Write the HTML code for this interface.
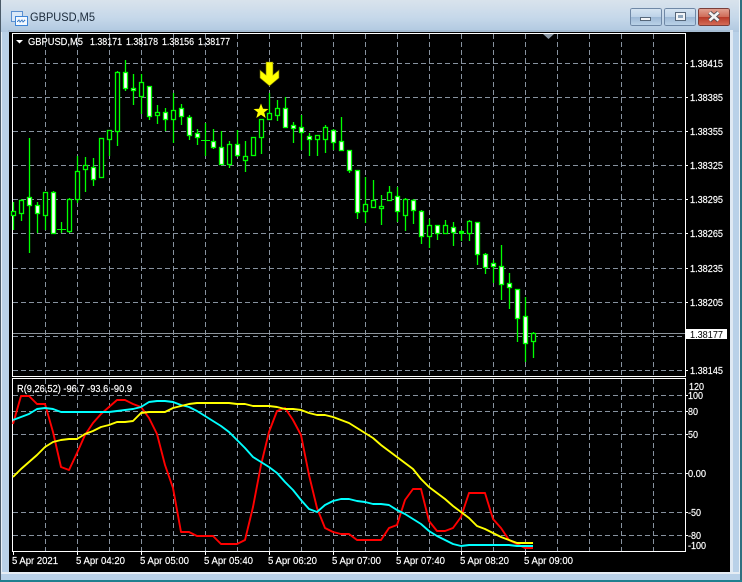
<!DOCTYPE html>
<html><head><meta charset="utf-8"><title>GBPUSD,M5</title>
<style>
html,body{margin:0;padding:0;width:742px;height:582px;overflow:hidden;background:#cfdfee}
svg{position:absolute;left:0;top:0;display:block}
text{font-family:"Liberation Sans",sans-serif;font-size:10.5px;fill:#fff;stroke:#fff;stroke-width:.18px}
</style></head><body>
<svg width="742" height="582" viewBox="0 0 742 582" xmlns="http://www.w3.org/2000/svg" shape-rendering="crispEdges">
<defs>
<linearGradient id="tb" x1="0" y1="0" x2="0" y2="1"><stop offset="0" stop-color="#d9e3ec"/><stop offset=".55" stop-color="#c6d8ea"/><stop offset="1" stop-color="#b0c8e0"/></linearGradient>
<linearGradient id="bt" x1="0" y1="0" x2="0" y2="1"><stop offset="0" stop-color="#d6e4f1"/><stop offset=".5" stop-color="#bcd2e8"/><stop offset=".51" stop-color="#9db9d6"/><stop offset="1" stop-color="#bcd3e8"/></linearGradient>
<linearGradient id="cl" x1="0" y1="0" x2="0" y2="1"><stop offset="0" stop-color="#e2a494"/><stop offset=".5" stop-color="#cf6b57"/><stop offset=".51" stop-color="#b83a28"/><stop offset="1" stop-color="#d6705a"/></linearGradient>
</defs>
<!-- window frame -->
<rect x="0" y="0" width="742" height="32" fill="url(#tb)"/>
<rect x="0" y="32" width="742" height="550" fill="#b9d1e8"/>
<rect x="0" y="0" width="1" height="582" fill="#4a5a68"/>
<rect x="1" y="32" width="1" height="540" fill="#e8f0f8"/>
<rect x="733" y="32" width="6" height="540" fill="#b9d1e8"/>
<rect x="730" y="30" width="3" height="544" fill="#dfe9f3"/>
<rect x="739" y="0" width="1" height="582" fill="#eaf2f8"/>
<rect x="740" y="0" width="2" height="582" fill="#2f6f7f"/>
<rect x="1" y="572" width="739" height="2" fill="#e6edf4"/>
<rect x="1" y="574" width="739" height="6" fill="#b9d1e8"/>
<rect x="0" y="580" width="742" height="2" fill="#1f7f8f"/>
<rect x="8" y="30" width="722" height="2" fill="#a6bcd2"/>
<!-- title icon -->
<rect x="11.5" y="11.5" width="11" height="10" fill="#dbe9f8" stroke="#5a8fd0"/>
<rect x="15.5" y="16.5" width="12" height="9" fill="#f4f9ff" stroke="#3f86d8"/>
<path d="M17 22l2-2 1 2 2-2 1 2 2-2" fill="none" stroke="#3f7fc8"/>
<text x="30" y="21" style="font-size:12px;fill:#1b2a3a;stroke:none" textLength="65" lengthAdjust="spacingAndGlyphs" shape-rendering="auto">GBPUSD,M5</text>
<!-- window buttons -->
<rect x="630.5" y="8.5" width="31" height="17" rx="2" fill="url(#bt)" stroke="#6f88a6"/>
<rect x="640.5" y="17.5" width="10" height="3" fill="#f1f4f7" stroke="#56677a"/>
<rect x="664.5" y="8.5" width="31" height="17" rx="2" fill="url(#bt)" stroke="#6f88a6"/>
<rect x="675.5" y="12.5" width="10" height="8" fill="#f1f4f7" stroke="#56677a"/>
<rect x="678" y="15" width="5" height="3" fill="#8fa6bc"/>
<rect x="698.5" y="8.5" width="31" height="17" rx="2" fill="url(#cl)" stroke="#7a3f3a"/>
<path d="M709.5 12.5L718.5 20.5M718.5 12.5L709.5 20.5" stroke="#4e4e55" stroke-width="4.4" fill="none" shape-rendering="auto"/>
<path d="M709.5 12.5L718.5 20.5M718.5 12.5L709.5 20.5" stroke="#f3f3f3" stroke-width="2.6" fill="none" shape-rendering="auto"/>
<!-- client -->
<rect x="9" y="32" width="721" height="540" fill="#000"/>
<!-- grid -->
<g stroke="#87929f" stroke-width="1" stroke-dasharray="5 3" fill="none">
<path d="M13 63.5H685M13 97.5H685M13 131.5H685M13 165.5H685M13 199.5H685M13 233.5H685M13 268.5H685M13 302.5H685M13 336.5H685M13 370.5H685"/>
<path d="M13 395.5H685M13 411.5H685M13 434.5H685M13 473.5H685M13 512.5H685M13 535.5H685"/>
<path d="M45.5 34V376M77.5 34V376M109.5 34V376M141.5 34V376M173.5 34V376M205.5 34V376M237.5 34V376M269.5 34V376M301.5 34V376M333.5 34V376M365.5 34V376M397.5 34V376M429.5 34V376M461.5 34V376M493.5 34V376M525.5 34V376M557.5 34V376M589.5 34V376M621.5 34V376M653.5 34V376"/>
<path d="M45.5 379V551M77.5 379V551M109.5 379V551M141.5 379V551M173.5 379V551M205.5 379V551M237.5 379V551M269.5 379V551M301.5 379V551M333.5 379V551M365.5 379V551M397.5 379V551M429.5 379V551M461.5 379V551M493.5 379V551M525.5 379V551M557.5 379V551M589.5 379V551M621.5 379V551M653.5 379V551"/>
</g>
<!-- current price line -->
<rect x="13" y="333" width="672" height="1" fill="#8d949b"/>
<!-- frames -->
<g fill="none" stroke="#fff">
<path d="M12.5 33.5H685.5V376.5H12.5Z"/>
<path d="M12.5 378.5H685.5V551.5H12.5Z"/>
</g>
<!-- axis ticks -->
<path d="M686 63.5h2M686 97.5h2M686 131.5h2M686 165.5h2M686 199.5h2M686 233.5h2M686 268.5h2M686 302.5h2M686 370.5h2M686 395.5h2M686 411.5h2M686 434.5h2M686 473.5h2M686 512.5h2M686 535.5h2M13.5 552v3M77.5 552v3M141.5 552v3M205.5 552v3M269.5 552v3M333.5 552v3M397.5 552v3M461.5 552v3M525.5 552v3" stroke="#fff" fill="none"/>
<!-- wicks -->
<path stroke="#00ff00" stroke-width="1.3" shape-rendering="auto" fill="none" d="M13.5 202V230M21.5 199V221M29.5 138V253M37.5 202V233M45.5 192V230M53.5 191V233M61.5 222V233M69.5 198V233M77.5 156V203M85.5 157V192M93.5 158V186M101.5 138V177M109.5 130V156M117.5 71V146M125.5 60V91M133.5 74V105M141.5 74V114M149.5 86V120M157.5 105V124M165.5 108V131M173.5 93V143M181.5 104V125M189.5 115V140M197.5 129V145M205.5 123V156M213.5 129V149M221.5 131V165M229.5 141V168M237.5 130V157M245.5 141V172M253.5 137V156M261.5 119V154M269.5 93V119M277.5 100V121M285.5 97V128M293.5 122V143M301.5 115V150M309.5 133V156M317.5 135V156M325.5 125V153M333.5 129V150M341.5 117V151M349.5 150V173M357.5 170V219M365.5 177V223M373.5 180V208M381.5 195V225M389.5 186V201M397.5 187V222M405.5 198V231M413.5 199V224M421.5 210V244M429.5 219V248M437.5 225V240M445.5 220V233M453.5 222V246M461.5 230V241M469.5 220V241M477.5 222V265M485.5 253V274M493.5 260V283M501.5 245V300M509.5 273V309M517.5 289V342M525.5 297V362M533.5 332V358"/>
<!-- doji -->
<path stroke="#00ff00" fill="none" d="M57 229.5H66M201 140.5H210"/>
<rect x="459" y="231" width="5" height="3" fill="#00ff00"/>
<!-- black bodies -->
<g fill="#000" stroke="#00ff00" stroke-width="1.3" shape-rendering="auto">
<rect x="11.5" y="211.5" width="4" height="4"/>
<rect x="19.5" y="200.5" width="4" height="13"/>
<rect x="43.5" y="192.5" width="4" height="23"/>
<rect x="67.5" y="199.5" width="4" height="32"/>
<rect x="75.5" y="171.5" width="4" height="28"/>
<rect x="83.5" y="165.5" width="4" height="4"/>
<rect x="99.5" y="138.5" width="4" height="39"/>
<rect x="107.5" y="130.5" width="4" height="9"/>
<rect x="115.5" y="72.5" width="4" height="59"/>
<rect x="139.5" y="82.5" width="4" height="14"/>
<rect x="155.5" y="112.5" width="4" height="3"/>
<rect x="171.5" y="110.5" width="4" height="9"/>
<rect x="227.5" y="144.5" width="4" height="20"/>
<rect x="243.5" y="156.5" width="4" height="4"/>
<rect x="251.5" y="137.5" width="4" height="18"/>
<rect x="259.5" y="119.5" width="4" height="18"/>
<rect x="267.5" y="113.5" width="4" height="6"/>
<rect x="275.5" y="108.5" width="4" height="7"/>
<rect x="315.5" y="135.5" width="4" height="4"/>
<rect x="323.5" y="127.5" width="4" height="12"/>
<rect x="363.5" y="204.5" width="4" height="7"/>
<rect x="371.5" y="200.5" width="4" height="7"/>
<rect x="379.5" y="206.5" width="4" height="2"/>
<rect x="387.5" y="192.5" width="4" height="8"/>
<rect x="403.5" y="199.5" width="4" height="16"/>
<rect x="427.5" y="225.5" width="4" height="11"/>
<rect x="443.5" y="225.5" width="4" height="8"/>
<rect x="467.5" y="221.5" width="4" height="12"/>
<rect x="531.5" y="333.5" width="4" height="8"/>
</g>
<!-- white bodies -->
<g fill="#fff" stroke="#00ff00" stroke-width="1.3" shape-rendering="auto">
<rect x="27.5" y="197.5" width="4" height="8"/>
<rect x="35.5" y="205.5" width="4" height="8"/>
<rect x="51.5" y="192.5" width="4" height="41"/>
<rect x="91.5" y="167.5" width="4" height="12"/>
<rect x="123.5" y="72.5" width="4" height="16"/>
<rect x="131.5" y="88.5" width="4" height="2"/>
<rect x="147.5" y="86.5" width="4" height="30"/>
<rect x="163.5" y="112.5" width="4" height="7"/>
<rect x="179.5" y="108.5" width="4" height="8"/>
<rect x="187.5" y="117.5" width="4" height="18"/>
<rect x="195.5" y="133.5" width="4" height="4"/>
<rect x="211.5" y="141.5" width="4" height="6"/>
<rect x="219.5" y="147.5" width="4" height="17"/>
<rect x="235.5" y="144.5" width="4" height="11"/>
<rect x="283.5" y="108.5" width="4" height="19"/>
<rect x="291.5" y="125.5" width="4" height="3"/>
<rect x="299.5" y="127.5" width="4" height="5"/>
<rect x="307.5" y="136.5" width="4" height="3"/>
<rect x="331.5" y="130.5" width="4" height="12"/>
<rect x="339.5" y="141.5" width="4" height="9"/>
<rect x="347.5" y="150.5" width="4" height="20"/>
<rect x="355.5" y="170.5" width="4" height="42"/>
<rect x="395.5" y="196.5" width="4" height="15"/>
<rect x="411.5" y="200.5" width="4" height="10"/>
<rect x="419.5" y="211.5" width="4" height="25"/>
<rect x="435.5" y="225.5" width="4" height="8"/>
<rect x="451.5" y="227.5" width="4" height="5"/>
<rect x="475.5" y="222.5" width="4" height="32"/>
<rect x="483.5" y="254.5" width="4" height="13"/>
<rect x="491.5" y="263.5" width="4" height="3"/>
<rect x="499.5" y="266.5" width="4" height="18"/>
<rect x="507.5" y="283.5" width="4" height="4"/>
<rect x="515.5" y="289.5" width="4" height="29"/>
<rect x="523.5" y="316.5" width="4" height="27"/>
</g>
<!-- arrow & star -->
<path d="M266 62H273V75L279 70V78L269.5 86L260 78V70L266 75Z" fill="#ffff00" stroke="#6a6a00" stroke-width=".6" shape-rendering="auto"/>
<path d="M261 103.5L263 108.8L268.5 109L264.2 112.4L265.7 118L261 114.8L256.3 118L257.8 112.4L253.5 109L259 108.8Z" fill="#ffff00" shape-rendering="auto"/>
<!-- indicator lines -->
<g fill="none" stroke-width="1.9" stroke-linejoin="round" shape-rendering="auto">
<polyline stroke="#ff0000" points="13,424 21,396 29,396 37,404 45,404 53,432 61,467 69,470 77,453 85,435 93,423 101,414 109,407 117,400 125,400 133,404 141,407 149,418 157,434 165,465 173,488 181,532 189,532 197,536 205,536 213,536 221,544 229,544 237,544 245,540 253,507 261,465 269,432 277,411 285,408 293,420 301,435 309,475 317,508 325,528 333,532 341,534 349,534 357,540 365,540 373,540 381,540 389,528 397,525 405,500 413,489 421,489 429,521 437,531 445,531 453,528 461,517 469,493 477,493 485,493 493,519 501,528 509,540 517,544 525,548 533,548"/>
<polyline stroke="#00ffff" points="13,420 21,417 29,414 37,409 45,408 53,409 61,412 69,412 77,412 85,412 93,412 101,412 109,412 117,411 125,410 133,409 141,407 149,402 157,401 165,401 173,402 181,405 189,407 197,411 205,416 213,421 221,426 229,432 237,440 245,448 253,457 261,462 269,467 277,473 285,482 293,490 301,500 309,509 317,512 325,505 333,501 341,499 349,499 357,501 365,502 373,504 381,504 389,505 397,510 405,514 413,519 421,524 429,531 437,536 445,540 453,544 461,546 469,545 477,545 485,545 493,545 501,545 509,545 517,546 525,546 533,546"/>
<polyline stroke="#ffff00" points="13,477 21,469 29,462 37,455 45,447 53,442 61,440 69,439 77,439 85,434 93,431 101,427 109,425 117,422 125,422 133,421 141,413 149,412 157,412 165,412 173,408 181,406 189,404 197,403 205,403 213,403 221,403 229,403 237,404 245,404 253,406 261,406 269,406 277,407 285,409 293,409 301,410 309,413 317,415 325,415 333,417 341,420 349,423 357,428 365,433 373,438 381,445 389,451 397,457 405,463 413,469 421,479 429,487 437,493 445,499 453,506 461,512 469,518 477,526 485,529 493,533 501,537 509,540 517,543 525,543 533,543"/>
</g>
<!-- header -->
<path d="M16 40h7l-3.5 3.5z" fill="#fff" shape-rendering="auto"/>
<path d="M543 34h11l-5.5 5z" fill="#8c99a6" shape-rendering="auto"/>
<g shape-rendering="auto">
<text x="28" y="45" textLength="55" lengthAdjust="spacingAndGlyphs">GBPUSD,M5</text>
<text x="90" y="45" textLength="32" lengthAdjust="spacingAndGlyphs">1.38171</text>
<text x="126" y="45" textLength="32" lengthAdjust="spacingAndGlyphs">1.38178</text>
<text x="162" y="45" textLength="32" lengthAdjust="spacingAndGlyphs">1.38156</text>
<text x="198" y="45" textLength="32" lengthAdjust="spacingAndGlyphs">1.38177</text>
<text x="17" y="392" textLength="115" lengthAdjust="spacingAndGlyphs">R(9,26,52) -96.7 -93.6 -90.9</text>
<!-- price axis -->
<text x="690" y="67" textLength="33" lengthAdjust="spacingAndGlyphs">1.38415</text>
<text x="690" y="101" textLength="33" lengthAdjust="spacingAndGlyphs">1.38385</text>
<text x="690" y="135" textLength="33" lengthAdjust="spacingAndGlyphs">1.38355</text>
<text x="690" y="169" textLength="33" lengthAdjust="spacingAndGlyphs">1.38325</text>
<text x="690" y="203" textLength="33" lengthAdjust="spacingAndGlyphs">1.38295</text>
<text x="690" y="237" textLength="33" lengthAdjust="spacingAndGlyphs">1.38265</text>
<text x="690" y="272" textLength="33" lengthAdjust="spacingAndGlyphs">1.38235</text>
<text x="690" y="306" textLength="33" lengthAdjust="spacingAndGlyphs">1.38205</text>
<text x="690" y="374" textLength="33" lengthAdjust="spacingAndGlyphs">1.38145</text>
<rect x="685" y="329" width="42" height="10" fill="#fff" shape-rendering="crispEdges"/>
<text x="690" y="338" textLength="33" lengthAdjust="spacingAndGlyphs" style="fill:#000;stroke:none">1.38177</text>
<!-- indicator axis -->
<text x="689" y="390" textLength="15" lengthAdjust="spacingAndGlyphs">120</text>
<text x="688" y="399" textLength="15" lengthAdjust="spacingAndGlyphs">100</text>
<text x="688" y="415" textLength="10" lengthAdjust="spacingAndGlyphs">80</text>
<text x="688" y="438" textLength="10" lengthAdjust="spacingAndGlyphs">50</text>
<text x="688" y="477" textLength="18" lengthAdjust="spacingAndGlyphs">0.00</text>
<text x="688" y="516" textLength="13" lengthAdjust="spacingAndGlyphs">-50</text>
<text x="688" y="539" textLength="13" lengthAdjust="spacingAndGlyphs">-80</text>
<text x="688" y="549" textLength="18" lengthAdjust="spacingAndGlyphs">-100</text>
<!-- time axis -->
<text x="12" y="564" textLength="46" lengthAdjust="spacingAndGlyphs">5 Apr 2021</text>
<text x="76" y="564" textLength="49" lengthAdjust="spacingAndGlyphs">5 Apr 04:20</text>
<text x="140" y="564" textLength="49" lengthAdjust="spacingAndGlyphs">5 Apr 05:00</text>
<text x="204" y="564" textLength="49" lengthAdjust="spacingAndGlyphs">5 Apr 05:40</text>
<text x="268" y="564" textLength="49" lengthAdjust="spacingAndGlyphs">5 Apr 06:20</text>
<text x="332" y="564" textLength="49" lengthAdjust="spacingAndGlyphs">5 Apr 07:00</text>
<text x="396" y="564" textLength="49" lengthAdjust="spacingAndGlyphs">5 Apr 07:40</text>
<text x="460" y="564" textLength="49" lengthAdjust="spacingAndGlyphs">5 Apr 08:20</text>
<text x="524" y="564" textLength="49" lengthAdjust="spacingAndGlyphs">5 Apr 09:00</text>
</g>
</svg>
</body></html>
